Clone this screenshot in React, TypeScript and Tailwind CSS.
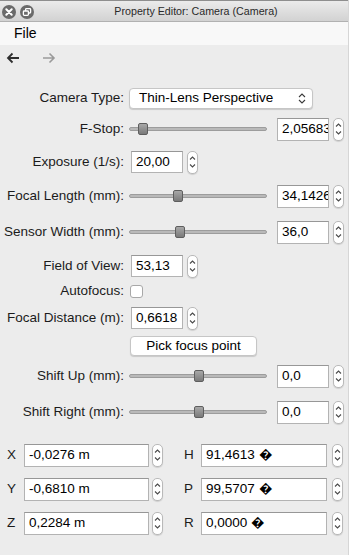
import React from "react";

const font = { fontFamily: '"Liberation Sans", Arial, Helvetica, sans-serif' };

function Stepper() {
  return (
    <div className="w-[11px] h-[23px] shrink-0 rounded-[5px] border border-[#b9b9b9] bg-white flex flex-col items-center justify-center gap-[4px] shadow-[0_1px_1px_rgba(0,0,0,0.12)]">
      <svg width="7" height="4" viewBox="0 0 7 4">
        <path d="M1 3.5 L3.5 1 L6 3.5" stroke="#4a4a4a" strokeWidth="1.1" fill="none" />
      </svg>
      <svg width="7" height="4" viewBox="0 0 7 4">
        <path d="M1 0.5 L3.5 3 L6 0.5" stroke="#4a4a4a" strokeWidth="1.1" fill="none" />
      </svg>
    </div>
  );
}

function Field({ value, w = 52, h = 23 }: { value: string; w?: number; h?: number }) {
  return (
    <div
      className="shrink-0 bg-white border border-[#b3b3b3] border-t-[#979797] flex items-center pl-[4px] overflow-hidden whitespace-nowrap text-[13.5px] text-black"
      style={{ width: w, height: h }}
    >
      {value}
    </div>
  );
}

function Slider({ pos }: { pos: number }) {
  return (
    <div className="relative w-[138px] h-[14px] shrink-0 flex items-center">
      <div className="w-full h-[4px] rounded-[2px] bg-[#b9b9b9] border border-[#9c9c9c]" />
      <div
        className="absolute top-[1px] w-[10px] h-[12px] rounded-[2px] border border-[#5e5e5e] bg-gradient-to-b from-[#a8a8a8] to-[#7a7a7a]"
        style={{ left: pos }}
      />
    </div>
  );
}

function Label({ children }: { children: React.ReactNode }) {
  return <div className="w-[124px] shrink-0 text-right text-[13.5px] text-[#1b1b1b] whitespace-nowrap">{children}</div>;
}

function SliderRow({ label, pos, value, mt }: { label: string; pos: number; value: string; mt: number }) {
  return (
    <div className="h-[24px] flex items-center" style={{ marginTop: mt }}>
      <Label>{label}</Label>
      <div className="ml-[5px]">
        <Slider pos={pos} />
      </div>
      <div className="ml-[10px] flex items-center gap-[4px]">
        <Field value={value} />
        <Stepper />
      </div>
    </div>
  );
}

function FieldRow({ label, value, mt }: { label: string; value: string; mt: number }) {
  return (
    <div className="h-[24px] flex items-center" style={{ marginTop: mt }}>
      <Label>{label}</Label>
      <div className="ml-[7px] flex items-center gap-[4px]">
        <Field value={value} h={22} />
        <Stepper />
      </div>
    </div>
  );
}

function XYRow({ a, av, b, bv, mt }: { a: string; av: string; b: string; bv: string; mt: number }) {
  return (
    <div className="h-[24px] flex items-center pl-[7px]" style={{ marginTop: mt }}>
      <div className="w-[17px] text-[13.5px] text-[#1b1b1b]">{a}</div>
      <Field value={av} w={125} h={23} />
      <div className="ml-[3px]">
        <Stepper />
      </div>
      <div className="ml-[21px] w-[17px] text-[13.5px] text-[#1b1b1b]">{b}</div>
      <Field value={bv} w={126} h={23} />
      <div className="ml-[5px]">
        <Stepper />
      </div>
    </div>
  );
}

export default function App() {
  return (
    <div className="w-[352px] h-[558px] bg-white overflow-hidden relative" style={font}>
      <div className="w-[349px] h-[555px] bg-[#ececec] flex flex-col border-r border-[#d6d6d6]">
        {/* Title bar */}
        <div className="h-[22px] shrink-0 border-t border-[#8e8e8e] border-b border-b-[#b1b1b1] bg-gradient-to-b from-[#ebebeb] to-[#d2d2d2] relative flex items-center justify-center">
          <div className="absolute left-[2px] top-[4px] flex gap-[4px]">
            <svg width="14" height="14" viewBox="0 0 14 14">
              <circle cx="7" cy="7" r="7" fill="#6a6a6a" />
              <path d="M4.3 4.3 L9.7 9.7 M9.7 4.3 L4.3 9.7" stroke="#fff" strokeWidth="2" strokeLinecap="round" />
            </svg>
            <svg width="14" height="14" viewBox="0 0 14 14">
              <circle cx="7" cy="7" r="7" fill="#6a6a6a" />
              <rect x="5.6" y="3.6" width="5" height="4.4" rx="0.8" fill="none" stroke="#fff" strokeWidth="1.3" />
              <rect x="3.4" y="6" width="5" height="4.4" rx="0.8" fill="#6a6a6a" stroke="#fff" strokeWidth="1.3" />
            </svg>
          </div>
          <div className="text-[10.7px] text-[#2a2a2a] ml-[44px]">Property Editor: Camera (Camera)</div>
        </div>
        {/* Menu bar */}
        <div className="h-[23px] shrink-0 bg-[#f8f8f8] flex items-center pl-[14px]">
          <span className="text-[14px] text-black">File</span>
        </div>
        {/* Toolbar */}
        <div className="h-[26px] shrink-0 flex items-center pl-[6px] gap-[22px]">
          <svg width="14" height="12" viewBox="0 0 14 12">
            <path d="M13 6 H2 M6.5 1.5 L2 6 L6.5 10.5" stroke="#2e2e2e" strokeWidth="1.8" fill="none" />
          </svg>
          <svg width="14" height="12" viewBox="0 0 14 12">
            <path d="M1 6 H12 M7.5 1.5 L12 6 L7.5 10.5" stroke="#9a9a9a" strokeWidth="1.6" fill="none" />
          </svg>
        </div>

        {/* Camera type */}
        <div className="h-[24px] flex items-center mt-[15px]">
          <Label>Camera Type:</Label>
          <div className="ml-[5px] w-[184px] h-[21px] rounded-[4px] bg-white border border-[#c6c6c6] shadow-[0_1px_1px_rgba(0,0,0,0.15)] flex items-center pl-[9px] pr-[6px] justify-between">
            <span className="text-[13.5px] text-black">Thin-Lens Perspective</span>
            <svg width="8" height="11" viewBox="0 0 8 11">
              <path d="M1 4 L4 1 L7 4 M1 7 L4 10 L7 7" stroke="#3a3a3a" strokeWidth="1.1" fill="none" />
            </svg>
          </div>
        </div>

        <SliderRow label="F-Stop:" pos={9} value="2,05683" mt={7} />
        <FieldRow label="Exposure (1/s):" value="20,00" mt={9} />
        <SliderRow label="Focal Length (mm):" pos={44} value="34,1426" mt={10} />
        <SliderRow label="Sensor Width (mm):" pos={46} value="36,0" mt={12} />
        <FieldRow label="Field of View:" value="53,13" mt={10} />

        <div className="h-[24px] flex items-center mt-[1px]">
          <Label>Autofocus:</Label>
          <div className="ml-[6px] w-[13px] h-[13px] rounded-[3px] bg-white border border-[#a8a8a8]" />
        </div>

        <FieldRow label="Focal Distance (m):" value="0,6618" mt={3} />

        <div className="h-[24px] flex items-center mt-[4px]">
          <div className="w-[124px] shrink-0" />
          <div className="ml-[6px] w-[127px] h-[20px] rounded-[4px] bg-white border border-[#c6c6c6] shadow-[0_1px_1px_rgba(0,0,0,0.15)] flex items-center justify-center text-[13.5px] text-black">
            Pick focus point
          </div>
        </div>

        <SliderRow label="Shift Up (mm):" pos={65} value="0,0" mt={6} />
        <SliderRow label="Shift Right (mm):" pos={65} value="0,0" mt={12} />

        <XYRow a="X" av="-0,0276 m" b="H" bv={"91,4613 \uFFFD"} mt={19} />
        <XYRow a="Y" av="-0,6810 m" b="P" bv={"99,5707 \uFFFD"} mt={10} />
        <XYRow a="Z" av="0,2284 m" b="R" bv={"0,0000 \uFFFD"} mt={10} />
      </div>
    </div>
  );
}
